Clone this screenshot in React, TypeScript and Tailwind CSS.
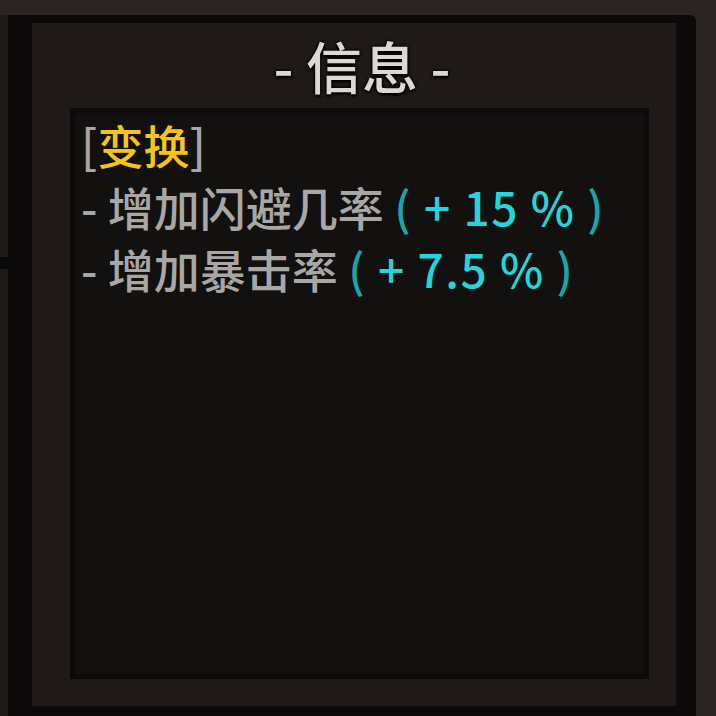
const cjk = "font-['Noto_Sans_CJK_SC','Noto_Sans',sans-serif]";

function Stat({ label, value }: { label: string; value: string }) {
  return (
    <div className="whitespace-pre">
      <span className="text-[#a9a7a5]">- {label} </span>
      <span className="tracking-[1.5px]">
        <span className="text-[#17a6aa]">(</span>
        <span className="text-[#25d5db]"> + {value} % </span>
        <span className="text-[#17a6aa]">)</span>
      </span>
    </div>
  );
}

export default function App() {
  return (
    <div className={`flex h-[716px] w-[716px] flex-col bg-[#2a2422] pt-[15px] font-medium ${cjk}`}>
      <div className="flex flex-1">
        {/* neighbouring panel edge */}
        <div className="flex w-[8px] flex-col bg-[#1e1a18]">
          <div className="h-[242px]" />
          <div className="h-[12px] bg-[#0a0909]" />
        </div>

        <div className="flex w-[688px] rounded-tr-[6px] bg-[#0b0909] pb-[10px] pl-[24px] pr-[20px] pt-[8px]">
          <div className="flex flex-1 flex-col bg-[#1f1a18]">
            <div className="flex h-[85px] items-center justify-center pb-[2px] pl-[16px]">
              <h1 className="whitespace-pre text-[56px] leading-none text-[#dcd8d4] [text-shadow:0_0_3px_#000,0_0_3px_#000,0_2px_3px_#000]">
                - 信息 -
              </h1>
            </div>

            <div className="mb-[27px] ml-[38px] mr-[27px] flex-1 border-[3px] border-[#0c0a0a] bg-[#131010] pl-[8px] pt-[2px] text-[46px] leading-[62px] shadow-[inset_0_0_4px_#000]">
              <div>
                <span className="text-[#a9a7a5]">[</span>
                <span className="text-[#f5c518]">变换</span>
                <span className="text-[#a9a7a5]">]</span>
              </div>
              <Stat label="增加闪避几率" value="15" />
              <Stat label="增加暴击率" value="7.5" />
            </div>
          </div>
        </div>
      </div>
    </div>
  );
}
